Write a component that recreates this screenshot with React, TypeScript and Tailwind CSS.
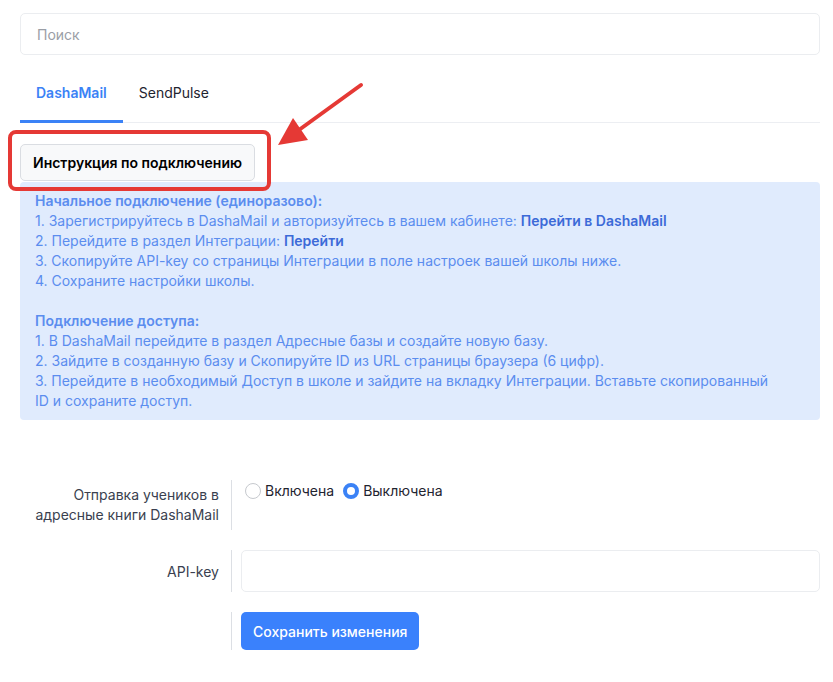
import React from "react";

// Steps shown in the instruction block
const firstSteps = [
  "1. Зарегистрируйтесь в DashaMail и авторизуйтесь в вашем кабинете: ",
  "2. Перейдите в раздел Интеграции: ",
  "3. Скопируйте API-key со страницы Интеграции в поле настроек вашей школы ниже.",
  "4. Сохраните настройки школы.",
];

function Arrow() {
  return (
    <svg className="absolute left-0 top-0 pointer-events-none" width="833" height="682">
      <line x1="361" y1="85" x2="292" y2="135" stroke="#e53935" strokeWidth="4" strokeLinecap="round" />
      <polygon points="278,145 293,118 308,140" fill="#e53935" />
    </svg>
  );
}

export default function App() {
  return (
    <div className="relative w-[833px] h-[682px] bg-white font-['Inter','Noto_Sans',sans-serif] text-[14px] overflow-hidden">
      <div className="pl-[20px] pr-[13px] pt-[13px]">
        <input
          className="w-full h-[42px] rounded-[5px] border border-[#ebedf0] px-[16px] text-[14px] placeholder:text-[#9a9ea6] outline-none"
          placeholder="Поиск"
        />

        <div className="mt-[8px] flex border-b border-[#eceef2]">
          <div className="px-[16px] pt-[20px] pb-[17px] border-b-[3px] border-[#3b82f6] -mb-px text-[#3b82f6] font-semibold leading-[20px]">
            DashaMail
          </div>
          <div className="px-[16px] pt-[20px] pb-[17px] text-[#1f2430] leading-[20px]">SendPulse</div>
        </div>

        <button className="mt-[21px] h-[37px] px-[12px] rounded-[5px] border border-[#dadde2] bg-[#f8f9fa] font-semibold text-black">
          Инструкция по подключению
        </button>

        <div className="mt-px rounded-[4px] bg-[#e0ebfd] px-[15px] pt-[9px] pb-[9px] text-[#5b8def] leading-[20px]">
          <div className="font-semibold">Начальное подключение (единоразово):</div>
          <div>
            {firstSteps[0]}
            <span className="font-semibold text-[#3c6ad8]">Перейти в DashaMail</span>
          </div>
          <div>
            {firstSteps[1]}
            <span className="font-semibold text-[#3c6ad8]">Перейти</span>
          </div>
          <div>{firstSteps[2]}</div>
          <div>{firstSteps[3]}</div>
          <div className="h-[20px]" />
          <div className="font-semibold">Подключение доступа:</div>
          <div>1. В DashaMail перейдите в раздел Адресные базы и создайте новую базу.</div>
          <div>2. Зайдите в созданную базу и Скопируйте ID из URL страницы браузера (6 цифр).</div>
          <div className="max-w-[745px]">
            3. Перейдите в необходимый Доступ в школе и зайдите на вкладку Интеграции. Вставьте скопированный ID и
            сохраните доступ.
          </div>
        </div>

        <div className="mt-[60px] flex flex-col gap-[20px]">
          <div className="flex">
            <div className="w-[211px] pr-[12px] pt-[5px] text-right text-[#3a3f4f] leading-[20px]">
              Отправка учеников в адресные книги DashaMail
            </div>
            <div className="h-[50px] border-l border-[#dcdfe4] pl-[13px] pt-[1px] flex items-start gap-[4px] text-[#1f2430] leading-[20px]">
              <label className="flex items-center gap-[4px]">
                <span className="w-[16px] h-[16px] rounded-full border border-[#c6c9ce] bg-white" />
                <span>Включена</span>
              </label>
              <label className="flex items-center gap-[4px] ml-[5px]">
                <span className="w-[16px] h-[16px] rounded-full border-[4.5px] border-[#3b82f6] bg-white" />
                <span>Выключена</span>
              </label>
            </div>
          </div>

          <div className="flex items-center">
            <div className="w-[211px] pr-[12px] text-right text-[#3a3f4f]">API-key</div>
            <div className="flex-1 border-l border-[#dcdfe4] pl-[9px]">
              <input className="w-full h-[42px] rounded-[5px] border border-[#ebedf0] px-[12px] outline-none" />
            </div>
          </div>

          <div className="flex">
            <div className="w-[211px]" />
            <div className="border-l border-[#dcdfe4] pl-[9px]">
              <button className="h-[38px] px-[12px] rounded-[5px] bg-[#3a81fc] text-white font-medium">
                Сохранить изменения
              </button>
            </div>
          </div>
        </div>
      </div>

      {/* annotation overlay */}
      <div className="absolute left-[8px] top-[130px] w-[263px] h-[61px] rounded-[8px] border-[4px] border-[#e53935] pointer-events-none" />
      <Arrow />
    </div>
  );
}
